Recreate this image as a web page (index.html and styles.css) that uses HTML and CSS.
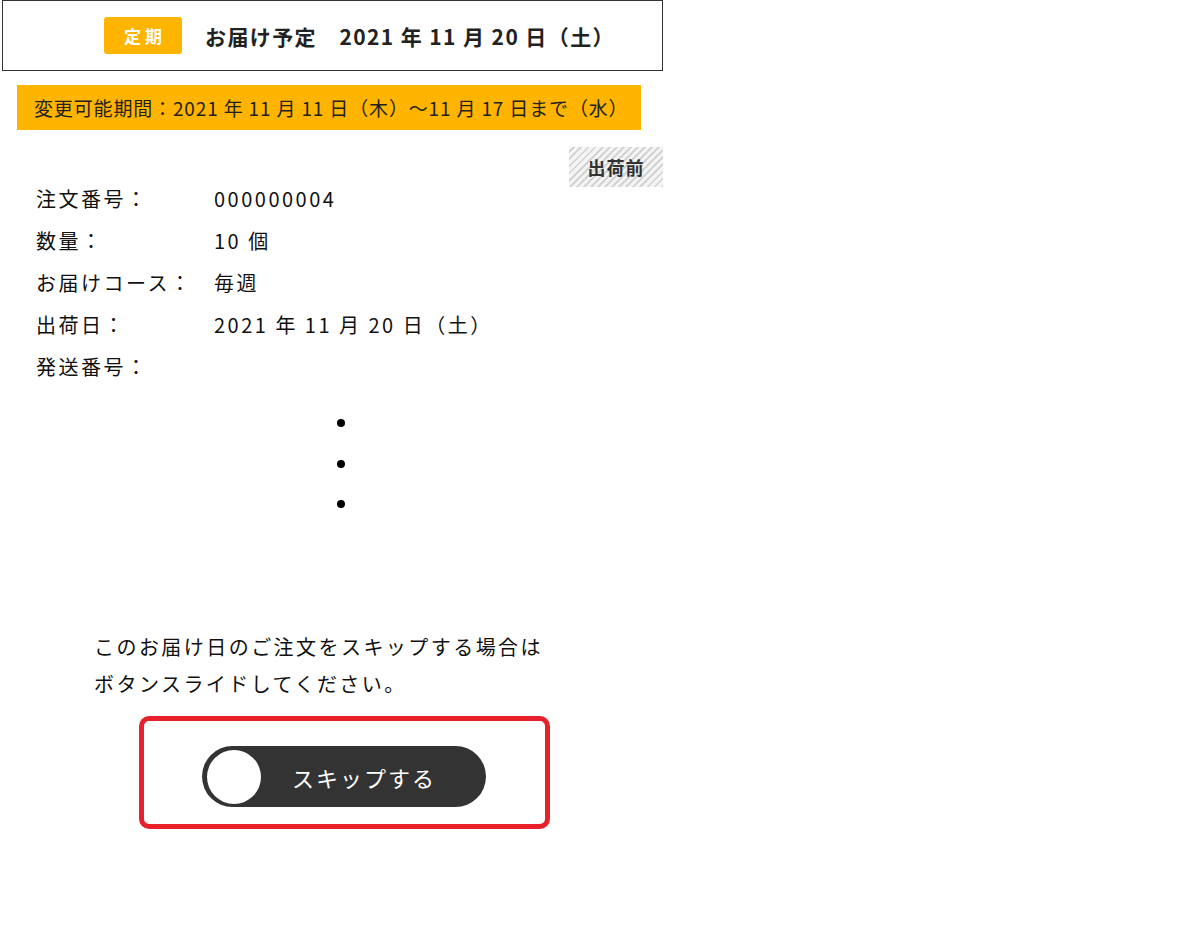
FILE: index.html
```html
<!DOCTYPE html>
<html lang="ja">
  <head>
    <meta charset="UTF-8" />
    <meta name="viewport" content="width=device-width, initial-scale=1.0" />
    <title>お届け予定</title>
    <link rel="stylesheet" href="styles.css">
  </head>
  <body>
    <div class="page">
      <!-- Delivery header -->
      <div class="delivery-head">
        <span class="badge">定期</span>
        <span class="delivery-date">お届け予定　2021 年 11 月 20 日（土）</span>
      </div>

      <div class="change-period">変更可能期間：2021 年 11 月 11 日（木）～11 月 17 日まで（水）</div>

      <div class="status-row">
        <span class="status">出荷前</span>
      </div>

      <!-- Order details -->
      <dl class="details">
        <div class="row"><dt>注文番号：</dt><dd>000000004</dd></div>
        <div class="row"><dt>数量：</dt><dd>10 個</dd></div>
        <div class="row"><dt>お届けコース：</dt><dd>毎週</dd></div>
        <div class="row"><dt>出荷日：</dt><dd>2021 年 11 月 20 日（土）</dd></div>
        <div class="row"><dt>発送番号：</dt><dd></dd></div>
      </dl>

      <div class="dots">
        <span></span>
        <span></span>
        <span></span>
      </div>

      <p class="skip-note">このお届け日のご注文をスキップする場合は<br />ボタンスライドしてください。</p>

      <div class="skip-box">
        <div class="slider">
          <span class="knob"></span>
          <span class="slider-label">スキップする</span>
        </div>
      </div>
    </div>
  </body>
</html>
```

FILE: styles.css
```css
/* Global Styles */
* {
  margin: 0;
  padding: 0;
  box-sizing: border-box;
}

body {
  background-color: #fff;
  color: #111;
  font-family: "Noto Sans CJK JP", "Noto Sans", sans-serif;
  font-size: 20px;
}

.page {
  width: 663px;
  padding-left: 2px;
}

/* Delivery header */
.delivery-head {
  display: flex;
  align-items: center;
  height: 71px;
  border: 1px solid #333;
  padding-left: 101px;
}

.badge {
  display: flex;
  align-items: center;
  justify-content: center;
  width: 78px;
  height: 37px;
  background-color: #ffb400;
  color: #fff;
  border-radius: 3px;
  font-size: 17px;
  font-weight: 700;
  letter-spacing: 4px;
  padding-left: 4px;
}

.delivery-date {
  margin-left: 23px;
  font-size: 21px;
  font-weight: 700;
  color: #222;
  letter-spacing: 1.4px;
}

.change-period {
  margin: 14px 0 0 15px;
  width: 624px;
  height: 45px;
  background-color: #ffb400;
  color: #222;
  font-size: 19px;
  line-height: 45px;
  padding-left: 17px;
  letter-spacing: 0.85px;
  white-space: nowrap;
}

/* Status tag */
.status-row {
  display: flex;
  justify-content: flex-end;
  margin-top: 17px;
}

.status {
  width: 94px;
  height: 40px;
  display: flex;
  align-items: center;
  justify-content: center;
  font-size: 18px;
  font-weight: 700;
  color: #333;
  letter-spacing: 1px;
  background: repeating-linear-gradient(
    -45deg,
    #d4d4d4 0,
    #d4d4d4 2px,
    #f4f4f4 2px,
    #f4f4f4 5px
  );
}

/* Order details */
.details {
  margin-top: -10px;
  padding-left: 34px;
  letter-spacing: 2.5px;
}

.row {
  display: flex;
  height: 42px;
  align-items: center;
}

.row dt {
  width: 178px;
}

.dots {
  display: flex;
  flex-direction: column;
  align-items: center;
  gap: 32.5px;
  width: 678px;
  margin-top: 32px;
}

.dots span {
  width: 8px;
  height: 8px;
  border-radius: 50%;
  background-color: #000;
}

.skip-note {
  margin: 120px 0 0 92px;
  line-height: 37px;
  letter-spacing: 2.45px;
}

.skip-box {
  margin: 14px 0 0 137px;
  width: 411px;
  height: 113px;
  border: 5px solid #e8202a;
  border-radius: 10px;
  padding: 25px 0 0 58px;
}

.slider {
  position: relative;
  width: 284px;
  height: 61px;
  border-radius: 31px;
  background-color: #333;
  display: flex;
  align-items: center;
  justify-content: center;
  padding-left: 40px;
}

.knob {
  position: absolute;
  left: 5px;
  top: 4px;
  width: 54px;
  height: 54px;
  border-radius: 50%;
  background-color: #fff;
}

.slider-label {
  color: #fff;
  font-size: 22px;
  letter-spacing: 2px;
}
```
